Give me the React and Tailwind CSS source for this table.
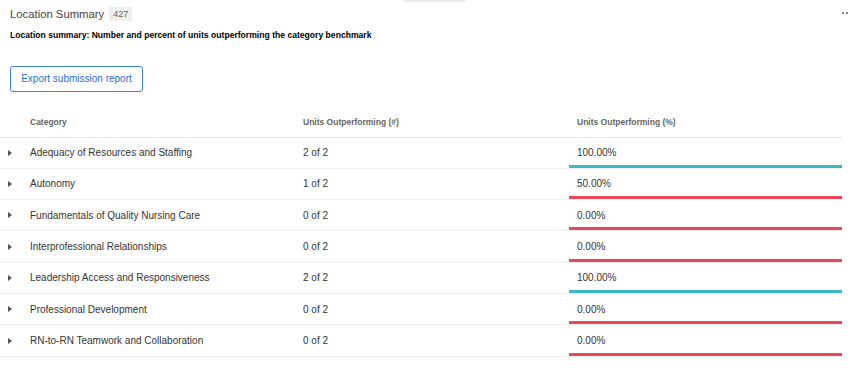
import React from 'react';

const rows = [
  { name: 'Adequacy of Resources and Staffing', count: '2 of 2', pct: '100.00%', good: true },
  { name: 'Autonomy', count: '1 of 2', pct: '50.00%', good: false },
  { name: 'Fundamentals of Quality Nursing Care', count: '0 of 2', pct: '0.00%', good: false },
  { name: 'Interprofessional Relationships', count: '0 of 2', pct: '0.00%', good: false },
  { name: 'Leadership Access and Responsiveness', count: '2 of 2', pct: '100.00%', good: true },
  { name: 'Professional Development', count: '0 of 2', pct: '0.00%', good: false },
  { name: 'RN-to-RN Teamwork and Collaboration', count: '0 of 2', pct: '0.00%', good: false },
];

function Caret() {
  return (
    <svg width="4" height="6" viewBox="0 0 4 6" className="block">
      <path d="M0 0 L4 3 L0 6 Z" fill="#555" />
    </svg>
  );
}

export default function App() {
  return (
    <div className="relative w-[850px] h-[368px] overflow-hidden bg-white font-['Liberation_Sans',Arial,sans-serif]">
      <div className="absolute left-[404px] top-0 w-[62px] h-[2px] rounded-b bg-[#ececec]" />
      <div className="absolute right-[-2px] top-[12px] flex gap-[2px]">
        <span className="w-[2px] h-[2px] rounded-full bg-[#555]" />
        <span className="w-[2px] h-[2px] rounded-full bg-[#555]" />
        <span className="w-[2px] h-[2px] rounded-full bg-[#555]" />
      </div>

      <div className="pl-[10px] pt-[7px] flex items-center gap-[5px]">
        <span className="text-[11.3px] text-[#444] leading-[14px]">Location Summary</span>
        <span className="bg-[#eeeeee] text-[#666] text-[9px] leading-[14px] px-[4px] rounded-[1px]">427</span>
      </div>
      <div className="pl-[10px] mt-[9px] text-[8.6px] font-bold text-black leading-[10px]">
        Location summary: Number and percent of units outperforming the category benchmark
      </div>

      <div className="pl-[10px] mt-[25px]">
        <button className="h-[26px] w-[133px] border border-[#3a86e0] rounded-[3px] text-[10px] text-[#1d6fd8] bg-white">
          Export submission report
        </button>
      </div>

      <div className="mt-[17px] w-[842px]">
        <div className="flex h-[29px] items-center border-b border-[#e4e4e4] text-[8.5px] font-semibold text-[#666]">
          <div className="w-[22px]" />
          <div className="w-[273px] pl-[8px]">Category</div>
          <div className="w-[274px] pl-[8px]">Units Outperforming (#)</div>
          <div className="flex-1 pl-[8px]">Units Outperforming (%)</div>
        </div>
        {rows.map((r) => (
          <div key={r.name} className="flex h-[31.33px] border-b border-[#efefef] text-[10px] text-[#333]">
            <div className="w-[22px] flex items-center pl-[8px]">
              <Caret />
            </div>
            <div className="w-[273px] pl-[8px] flex items-center">{r.name}</div>
            <div className="w-[274px] pl-[8px] flex items-center">{r.count}</div>
            <div className="flex-1 flex flex-col">
              <div className="flex-1 mt-[3px] pl-[8px] flex items-center">{r.pct}</div>
              <div className={`h-[3px] ${r.good ? 'bg-[#3bb8c4]' : 'bg-[#e6475a]'}`} />
            </div>
          </div>
        ))}
      </div>
    </div>
  );
}
